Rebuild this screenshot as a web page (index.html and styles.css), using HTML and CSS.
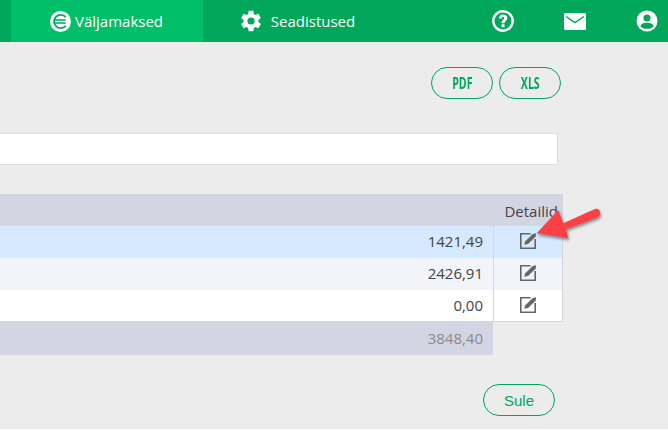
FILE: index.html
```html
<!DOCTYPE html>
<html lang="et">
    <head>
        <meta charset="UTF-8">
        <title>Väljamaksed</title>
        <link rel="stylesheet" href="styles.css">
    </head>
    <body>
        <nav class="topbar">
            <a class="tab tab-active">
                <svg class="tab-icon" viewBox="0 0 20 20">
                    <circle cx="10" cy="10" r="10" fill="#fff"/>
                    <path d="M15 6A6.300 6.300 0 1 0 15 14" fill="none" stroke="#00a65a" stroke-width="1.700"/>
                    <path d="M3.500 7.900h11.500v1.400H3.500zM3.500 10.700h11.500v1.400H3.500z" fill="#00a65a"/>
                </svg>
                Väljamaksed
            </a>
            <a class="tab tab-settings">
                <svg class="tab-icon tab-icon-gear" viewBox="0 0 24 24">
                    <path fill="#fff" d="M19.400 13a7.500 7.500 0 0 0 0-2l2.500-1.900-2.500-4.300-2.900 1.200a7.500 7.500 0 0 0-1.700-1L14.400 1.800H9.600L9.200 5a7.500 7.500 0 0 0-1.700 1L4.600 4.800 2.100 9.100 4.600 11a7.500 7.500 0 0 0 0 2l-2.500 1.900 2.500 4.300 2.900-1.200a7.500 7.500 0 0 0 1.700 1l.4 3.200h4.800l.4-3.200a7.500 7.500 0 0 0 1.700-1l2.900 1.200 2.500-4.300zM12 15.600a3.600 3.600 0 1 1 0-7.200 3.600 3.600 0 0 1 0 7.200z"/>
                </svg>
                Seadistused
            </a>
            <div class="top-icons">
                <svg class="top-icon" viewBox="0 0 22 22">
                    <circle cx="11" cy="11" r="9.700" fill="none" stroke="#fff" stroke-width="2.400"/>
                    <path d="M6.800 8.400C7 5.800 8.800 4.500 11.100 4.500c2.500 0 4.200 1.400 4.200 3.600 0 3-2.800 2.900-2.800 5.200H9.600c0-3.300 2.500-3.400 2.500-5 0-.8-.4-1.300-1.100-1.300-.8 0-1.100.6-1.200 1.400zM9.600 14.300h2.900v2.900H9.600z" fill="#fff"/>
                </svg>
                <svg class="top-icon top-mail" viewBox="0 0 22 17">
                    <path d="M1.500 0h19A1.500 1.500 0 0 1 22 1.500v14a1.500 1.500 0 0 1-1.500 1.500h-19A1.500 1.500 0 0 1 0 15.500v-14A1.500 1.500 0 0 1 1.500 0z" fill="#fff"/>
                    <path d="M2 3.500l9 6 9-6" fill="none" stroke="#00a65a" stroke-width="1.500"/>
                </svg>
                <svg class="top-icon" viewBox="0 0 22 22">
                    <circle cx="11" cy="11" r="10.500" fill="#fff"/>
                    <circle cx="11" cy="8" r="3.500" fill="#00a65a"/>
                    <path d="M4.500 16.500c0-2.600 3-3.800 6.500-3.800s6.500 1.200 6.500 3.800c-1.500 1.500-3.800 2.300-6.500 2.300s-5-.8-6.500-2.300z" fill="#00a65a"/>
                </svg>
            </div>
        </nav>

        <main class="content">
            <div class="export-row">
                <button class="pill pill-export"><span class="narrow">PDF</span></button>
                <button class="pill pill-export"><span class="narrow">XLS</span></button>
            </div>

            <div class="search-box"></div>

            <div class="table">
                <div class="row row-head">
                    <div class="cell-sum"></div>
                    <div class="cell-detail">Detailid</div>
                </div>
                <div class="row row-selected">
                    <div class="cell-sum">1421,49</div>
                    <div class="cell-detail"><svg class="edit-icon"><use href="#edit"/></svg></div>
                </div>
                <div class="row row-alt">
                    <div class="cell-sum">2426,91</div>
                    <div class="cell-detail"><svg class="edit-icon"><use href="#edit"/></svg></div>
                </div>
                <div class="row row-plain">
                    <div class="cell-sum">0,00</div>
                    <div class="cell-detail"><svg class="edit-icon"><use href="#edit"/></svg></div>
                </div>
                <div class="row-total">3848,40</div>
            </div>

            <div class="close-row">
                <button class="pill pill-close">Sule</button>
            </div>
        </main>

        <!-- red arrow drawn on top of the screenshot -->
        <svg class="arrow" viewBox="0 0 76 42">
            <defs>
                <filter id="arrowShadow" x="-20%" y="-20%" width="140%" height="150%">
                    <feDropShadow dx="1" dy="2" stdDeviation="1.500" flood-color="#000" flood-opacity="0.45"/>
                </filter>
            </defs>
            <path filter="url(#arrowShadow)" fill="#fb4146" d="M6.700 29.300L28.300 6l5 13.300L65 5c3-1 5 1 5 4.300 0 2.500-1.300 3.700-3.300 4.400L36 25.300l2.300 9z"/>
        </svg>

        <svg class="sprite">
            <symbol id="edit" viewBox="0 0 16 16">
                <path d="M10.500 .8H.8v14.400h14.400V6" fill="none" stroke="#666" stroke-width="1.600"/>
                <path d="M4.300 11.800l.7-3.200L12.700 1 16 .2l-.2 3.200-7.800 7.500z" fill="#666"/>
            </symbol>
        </svg>
    </body>
</html>
```

FILE: styles.css
```css
* {
    box-sizing: border-box;
}
html, body {
    height: 100%;
}
body {
    margin: 0;
    background-color: #fff;
    font-family: "Open Sans", sans-serif;
    overflow: hidden;
    position: relative;
}

/* Top navigation */
.topbar {
    display: flex;
    height: 42px;
    padding-left: 11px;
    background-color: #00a65a;
    color: #fff;
    font-size: 15px;
}
.tab {
    display: flex;
    align-items: center;
    justify-content: center;
    gap: 5px;
    width: 192px;
}
.tab-settings {
    gap: 8px;
    padding-right: 4px;
}
.tab-active {
    background-color: #00bf68;
    gap: 4px;
    padding-right: 1px;
}
.tab-icon {
    width: 21px;
    height: 21px;
}
.tab-icon-gear {
    width: 24px;
    height: 24px;
}
.top-icons {
    margin-left: auto;
    display: flex;
    align-items: center;
    gap: 50px;
    padding-right: 10px;
}
.top-icon {
    width: 22px;
    height: 22px;
}
.top-mail {
    height: 17px;
}

/* Page content */
.content {
    height: 387px;
    background-color: #ececec;
    display: flex;
    flex-direction: column;
    padding-top: 25px;
}
.export-row {
    display: flex;
    justify-content: flex-end;
    gap: 6px;
    padding-right: 107px;
}
.pill {
    height: 32px;
    background: none;
    border: 1px solid #00a65a;
    border-radius: 16px;
    padding: 0;
    color: #00a65a;
}
.pill-export {
    width: 62px;
    font-family: "Open Sans", sans-serif;
    font-size: 16px;
    font-weight: 700;
}
.narrow {
    display: inline-block;
    transform: scaleX(0.66);
}
.search-box {
    height: 32px;
    width: 558px;
    margin-top: 34px;
    background-color: #fff;
    border: 1px solid #ddd;
    border-left: none;
}

/* Table */
.table {
    width: 563px;
    margin-top: 29px;
    font-size: 15px;
    color: #444;
}
.row {
    display: flex;
    height: 32px;
}
.cell-sum {
    flex: 1;
    padding-right: 10px;
    line-height: 31px;
    text-align: right;
}
.cell-detail {
    width: 70px;
    display: flex;
    align-items: center;
    justify-content: center;
    padding-bottom: 2px;
    border-left: 1px solid #d4d5e2;
    border-right: 1px solid #d4d5e2;
}
.row-head {
    background-color: #d4d5e2;
}
.row-head .cell-detail {
    border: none;
    justify-content: flex-end;
    padding: 2px 5px 0 0;
}
.row-selected {
    background-color: #d5e9ff;
}
.row-alt {
    background-color: #f3f4f9;
}
.row-plain {
    background-color: #fff;
    border-bottom: 1px solid #d4d5e2;
}
.row-total {
    width: 493px;
    height: 33px;
    padding-right: 10px;
    line-height: 33px;
    text-align: right;
    background-color: #d4d5e2;
    color: #8a8a8a;
}
.edit-icon {
    width: 16px;
    height: 16px;
}
.close-row {
    display: flex;
    justify-content: flex-end;
    padding-right: 113px;
    margin-top: 29px;
}
.pill-close {
    width: 72px;
    font-family: "Liberation Sans", sans-serif;
    font-size: 15px;
    color: #00a65a;
}

/* Overlay */
.arrow {
    position: absolute;
    left: 530px;
    top: 204px;
    width: 76px;
    height: 42px;
}
.sprite {
    display: none;
}
```
